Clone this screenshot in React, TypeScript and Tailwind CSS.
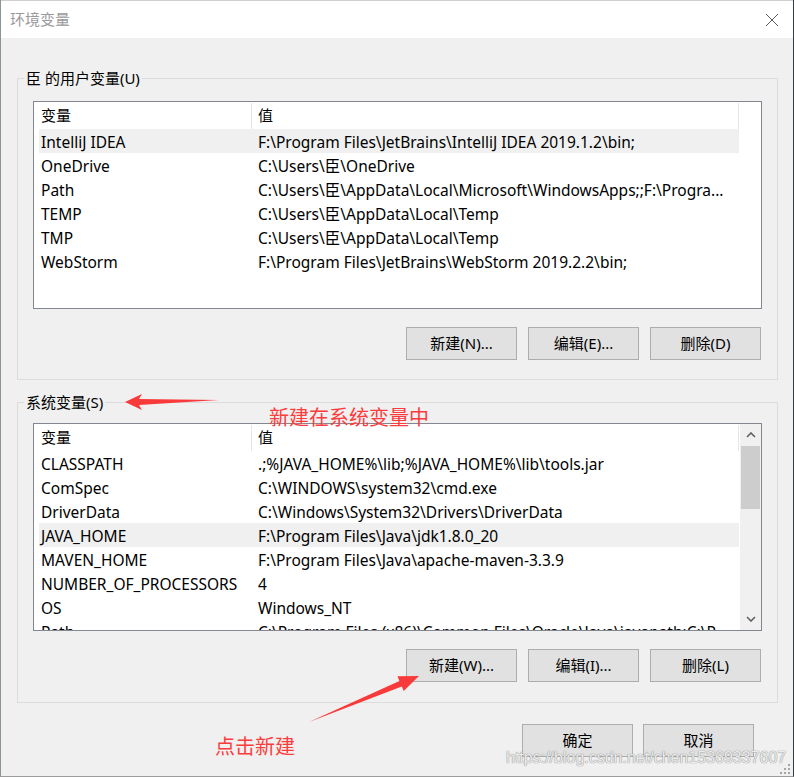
import type { ReactNode } from "react";

type EnvVar = {
  name: string;
  value: string;
  selected?: boolean;
};

const userVars: EnvVar[] = [
  {
    name: "IntelliJ IDEA",
    value: "F:\\Program Files\\JetBrains\\IntelliJ IDEA 2019.1.2\\bin;",
    selected: true,
  },
  { name: "OneDrive", value: "C:\\Users\\臣\\OneDrive" },
  {
    name: "Path",
    value: "C:\\Users\\臣\\AppData\\Local\\Microsoft\\WindowsApps;;F:\\Progra...",
  },
  { name: "TEMP", value: "C:\\Users\\臣\\AppData\\Local\\Temp" },
  { name: "TMP", value: "C:\\Users\\臣\\AppData\\Local\\Temp" },
  {
    name: "WebStorm",
    value: "F:\\Program Files\\JetBrains\\WebStorm 2019.2.2\\bin;",
  },
];

const systemVars: EnvVar[] = [
  { name: "CLASSPATH", value: ".;%JAVA_HOME%\\lib;%JAVA_HOME%\\lib\\tools.jar" },
  { name: "ComSpec", value: "C:\\WINDOWS\\system32\\cmd.exe" },
  { name: "DriverData", value: "C:\\Windows\\System32\\Drivers\\DriverData" },
  {
    name: "JAVA_HOME",
    value: "F:\\Program Files\\Java\\jdk1.8.0_20",
    selected: true,
  },
  { name: "MAVEN_HOME", value: "F:\\Program Files\\Java\\apache-maven-3.3.9" },
  { name: "NUMBER_OF_PROCESSORS", value: "4" },
  { name: "OS", value: "Windows_NT" },
  {
    name: "Path",
    value:
      "C:\\Program Files (x86)\\Common Files\\Oracle\\Java\\javapath;C:\\P...",
  },
];

function WinButton({ children }: { children: ReactNode }) {
  return (
    <button className="flex h-[33px] w-[111px] items-center justify-center border border-[#adadad] bg-[#e1e1e1] text-[15px] text-black">
      {children}
    </button>
  );
}

function ScrollBar() {
  return (
    <div className="flex w-[21px] flex-col bg-[#f0f0f0]">
      <div className="flex h-[22px] items-center justify-center">
        <svg width="10" height="6" viewBox="0 0 10 6" aria-hidden>
          <path d="M1 5 L5 1 L9 5" fill="none" stroke="#606060" strokeWidth="1.6" />
        </svg>
      </div>
      <div className="mx-px h-[63px] bg-[#cdcdcd]" />
      <div className="flex-1" />
      <div className="flex h-[22px] items-center justify-center">
        <svg width="10" height="6" viewBox="0 0 10 6" aria-hidden>
          <path d="M1 1 L5 5 L9 1" fill="none" stroke="#606060" strokeWidth="1.6" />
        </svg>
      </div>
    </div>
  );
}

function VarList({ rows, scroll }: { rows: EnvVar[]; scroll?: boolean }) {
  return (
    <div className="flex h-[208px] w-[729px] overflow-hidden border border-[#828790] bg-white">
      <div className="ml-[5px] w-[700px] shrink-0">
        <div className="flex h-[27px] items-center text-[15px] text-black">
          <div className="flex h-[26px] w-[213px] items-center border-r border-[#e5e5e5] pl-[2px]">
            变量
          </div>
          <div className="flex h-[26px] flex-1 items-center border-r border-[#e5e5e5] pl-[6px]">
            值
          </div>
        </div>
        {rows.map((row) => (
          <div
            key={row.name}
            className={`flex h-[24px] pt-[2px] text-[15.5px] leading-[22px] text-black ${
              row.selected ? "bg-[#f0f0f0]" : ""
            }`}
          >
            <div className="w-[213px] shrink-0 truncate pl-[2px]">{row.name}</div>
            <div className="min-w-0 flex-1 truncate pl-[6px] pr-[4px]">{row.value}</div>
          </div>
        ))}
      </div>
      <div className="flex-1" />
      {scroll ? <ScrollBar /> : null}
    </div>
  );
}

function GroupBox({
  label,
  className,
  children,
}: {
  label: string;
  className: string;
  children: ReactNode;
}) {
  return (
    <div
      className={`relative ml-[16px] w-[761px] border border-[#dcdcdc] px-[15px] pb-[19px] ${className}`}
    >
      <span className="absolute -top-[11px] left-[6px] bg-[#f0f0f0] px-[2px] text-[15px] leading-[20px] text-black">
        {label}
      </span>
      {children}
    </div>
  );
}

export default function App() {
  return (
    <div className="relative h-[777px] w-[794px] overflow-hidden border-b border-l border-r border-b-[#9c9c9c] border-l-[#8b949a] border-r-[#2f3d45] bg-[#f0f0f0] font-['Noto_Sans','Noto_Sans_CJK_SC',sans-serif]">
      <div className="flex h-[38px] items-center justify-between border-t border-[#cfcfcf] bg-white pl-[9px] pr-[14px]">
        <span className="text-[15px] text-[#9a9a9a]">环境变量</span>
        <svg width="14" height="14" viewBox="0 0 14 14" aria-hidden>
          <path d="M1 1 L13 13 M13 1 L1 13" stroke="#5a5a5a" strokeWidth="1" />
        </svg>
      </div>

      <GroupBox label="臣 的用户变量(U)" className="mt-[40px] pt-[22px]">
        <VarList rows={userVars} />
        <div className="mt-[18px] flex justify-end gap-[11px] pr-px">
          <WinButton>新建(N)...</WinButton>
          <WinButton>编辑(E)...</WinButton>
          <WinButton>删除(D)</WinButton>
        </div>
      </GroupBox>

      <GroupBox label="系统变量(S)" className="mt-[22px] pb-[20px] pt-[20px]">
        <VarList rows={systemVars} scroll />
        <div className="mt-[18px] flex justify-end gap-[11px] pr-px">
          <WinButton>新建(W)...</WinButton>
          <WinButton>编辑(I)...</WinButton>
          <WinButton>删除(L)</WinButton>
        </div>
      </GroupBox>

      <div className="mt-[21px] flex justify-end gap-[10px] pr-[39px]">
        <WinButton>确定</WinButton>
        <WinButton>取消</WinButton>
      </div>

      {/* annotations drawn over the dialog */}
      <svg
        className="pointer-events-none absolute left-0 top-0"
        width="794"
        height="777"
        aria-hidden
      >
        <polygon points="124,402 141,394 138,399 218,400 138,405 141,410" fill="#f83a3a" />
        <polygon
          points="418,676 396.5,676.3 398.4,680.9 308,722 400.8,686.5 402.7,691.1"
          fill="#f83a3a"
        />
        <g fill="#a6a6a6">
          <rect x="787" y="764" width="2" height="2" />
          <rect x="783" y="768" width="2" height="2" />
          <rect x="787" y="768" width="2" height="2" />
          <rect x="779" y="772" width="2" height="2" />
          <rect x="783" y="772" width="2" height="2" />
          <rect x="787" y="772" width="2" height="2" />
        </g>
      </svg>
      <span className="absolute left-[268px] top-[407px] text-[20px] leading-[22px] text-[#fb3c3c]">
        新建在系统变量中
      </span>
      <span className="absolute left-[214px] top-[736px] text-[20px] leading-[22px] text-[#fb3c3c]">
        点击新建
      </span>
      <span className="absolute left-[505px] top-[750px] font-['Liberation_Sans',sans-serif] text-[16px] leading-[16px] text-[#ececec] [text-shadow:0_0_1px_#8c8c8c,0_0_1px_#8c8c8c]">
        https://blog.csdn.net/chen15369337607
      </span>
    </div>
  );
}
